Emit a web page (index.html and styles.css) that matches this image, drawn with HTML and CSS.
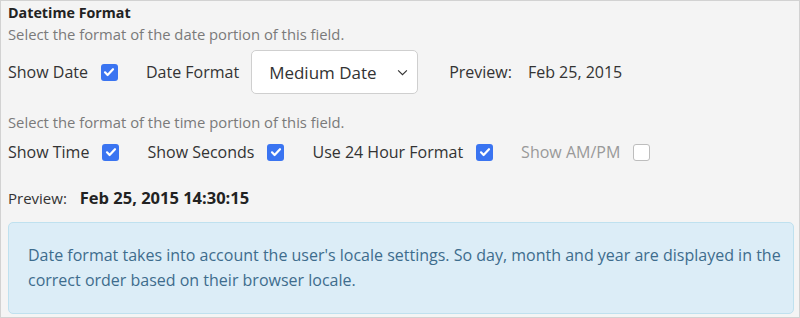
FILE: index.html
```html
<!DOCTYPE html>
<html lang="en">
<head>
    <meta charset="UTF-8">
    <meta name="viewport" content="width=device-width, initial-scale=1.0">
    <title>Datetime Format</title>
    <link rel="stylesheet" href="styles.css">
</head>
<body>
    <div class="panel">
        <div class="title">Datetime Format</div>
        <div class="hint">Select the format of the date portion of this field.</div>

        <div class="row row-date">
            <span class="label">Show Date</span>
            <span class="check on">
                <svg viewBox="0 0 16 16" width="16" height="16"><path d="M4 8.3l2.6 2.7L12 5.2" fill="none" stroke="#fff" stroke-width="2.2" stroke-linecap="round" stroke-linejoin="round"/></svg>
            </span>
            <span class="label">Date Format</span>
            <div class="select">
                <span>Medium Date</span>
                <svg viewBox="0 0 12 8" width="11" height="7"><path d="M1 1.5l5 5 5-5" fill="none" stroke="#333" stroke-width="1.3"/></svg>
            </div>
            <span class="label preview-label">Preview:</span>
            <span class="label">Feb 25, 2015</span>
        </div>

        <div class="hint hint-time">Select the format of the time portion of this field.</div>

        <div class="row row-time">
            <span class="label">Show Time</span>
            <span class="check on">
                <svg viewBox="0 0 16 16" width="16" height="16"><path d="M4 8.3l2.6 2.7L12 5.2" fill="none" stroke="#fff" stroke-width="2.2" stroke-linecap="round" stroke-linejoin="round"/></svg>
            </span>
            <span class="label">Show Seconds</span>
            <span class="check on">
                <svg viewBox="0 0 16 16" width="16" height="16"><path d="M4 8.3l2.6 2.7L12 5.2" fill="none" stroke="#fff" stroke-width="2.2" stroke-linecap="round" stroke-linejoin="round"/></svg>
            </span>
            <span class="label">Use 24 Hour Format</span>
            <span class="check on">
                <svg viewBox="0 0 16 16" width="16" height="16"><path d="M4 8.3l2.6 2.7L12 5.2" fill="none" stroke="#fff" stroke-width="2.2" stroke-linecap="round" stroke-linejoin="round"/></svg>
            </span>
            <span class="label disabled">Show AM/PM</span>
            <span class="check off"></span>
        </div>

        <div class="preview">
            <span>Preview:</span>
            <strong>Feb 25, 2015 14:30:15</strong>
        </div>

        <div class="info">
            Date format takes into account the user's locale settings. So day, month and year are displayed in the correct order based on their browser locale.
        </div>
    </div>
</body>
</html>
```

FILE: styles.css
```css
body {
    margin: 0;
    font-family: "Open Sans", "Noto Sans", Arial, sans-serif;
    font-size: 16px;
    color: #333;
}

.panel {
    box-sizing: border-box;
    height: 318px;
    background-color: #f4f4f4;
    border: 1px solid #d2d2d2;
    padding: 0 5px 0 7px;
}

.title {
    font-weight: bold;
    font-size: 14.3px;
    line-height: 22px;
    margin-top: 1px;
    color: #222;
}

.hint {
    color: #7a7a7a;
    font-size: 14.8px;
    line-height: 20px;
}

.hint-time {
    margin-top: 18px;
}

.row {
    display: flex;
    align-items: center;
}

.row-date {
    margin-top: 6px;
    height: 44px;
}

.row-time {
    margin-top: 7px;
    height: 26px;
}

.label {
    white-space: nowrap;
}

.disabled {
    color: #999;
}

/* casillas */
.check {
    box-sizing: border-box;
    width: 17px;
    height: 17px;
    border-radius: 3px;
    margin: 0 28px 0 13px;
    display: flex;
    align-items: center;
    justify-content: center;
}

.check.on {
    background-color: #3a74f1;
}

.check.off {
    background-color: #fff;
    border: 1.5px solid #bdbdbd;
}

.select {
    box-sizing: border-box;
    width: 167px;
    height: 44px;
    margin-left: 12px;
    background-color: #fff;
    border: 1px solid #cfcfcf;
    border-radius: 5px;
    display: flex;
    align-items: center;
    justify-content: space-between;
    padding: 0 9px 0 17px;
    font-size: 17px;
}

.preview-label {
    margin-left: 31px;
    margin-right: 16px;
}

.preview {
    margin-top: 22px;
    font-size: 15px;
    line-height: 22px;
}

.preview strong {
    margin-left: 9px;
    font-size: 16.5px;
    color: #222;
}

.info {
    margin-top: 13px;
    background-color: #dcedf7;
    border: 1px solid #bfe1ef;
    border-radius: 5px;
    color: #3e6c8d;
    font-size: 16px;
    line-height: 25px;
    padding: 20px 6px 20px 19px;
}
```
